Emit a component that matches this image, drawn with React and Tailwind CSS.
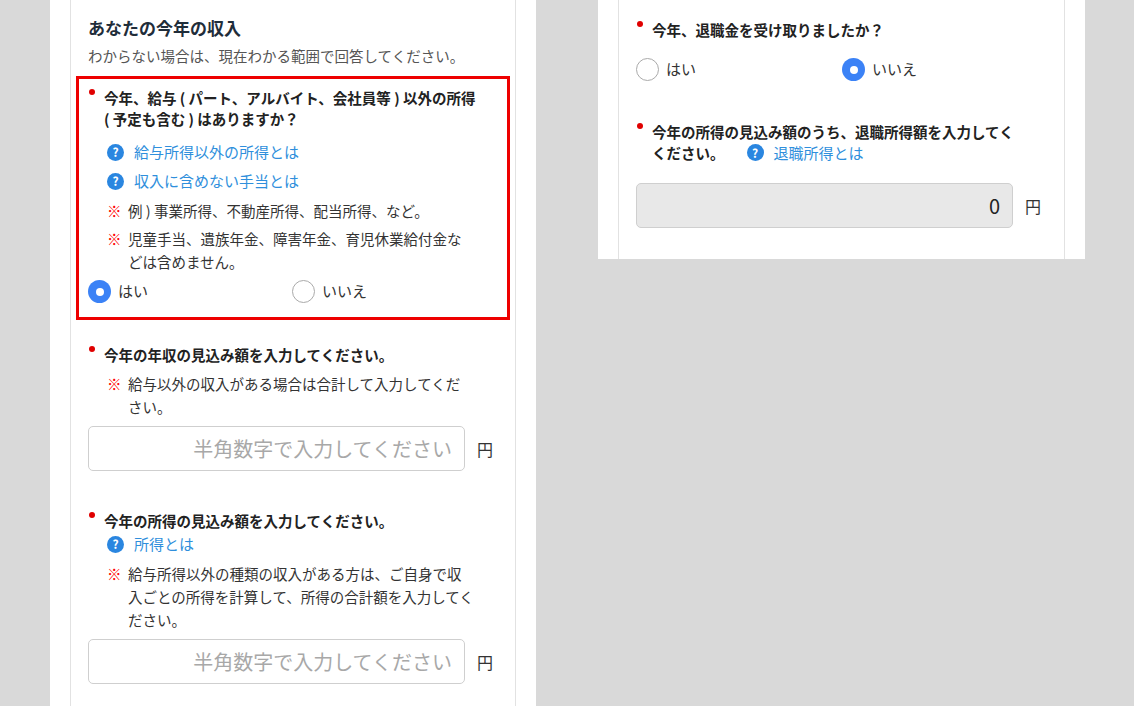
const F = { fontFamily: '"Noto Sans CJK JP", "Noto Sans", sans-serif' };

function Q({ children }) {
  return (
    <div className="relative pl-[16px] text-[14.5px] font-bold leading-[21px] text-[#222] whitespace-nowrap">
      <span className="absolute left-[1px] top-[2px] w-[6px] h-[6px] rounded-full bg-[#e00000]" />
      {children}
    </div>
  );
}
function Help({ children, className = "" }) {
  return (
    <div className={"flex items-center gap-[10px] text-[15px] leading-[20px] text-[#2f8fdc] whitespace-nowrap " + className}>
      <span className="w-[17px] h-[17px] rounded-full bg-[#2a86e0] text-white text-[12px] font-bold flex items-center justify-center leading-none">?</span>
      {children}
    </div>
  );
}
function Note({ children, className = "" }) {
  return (
    <div className={"relative pl-[21px] text-[14.5px] leading-[23px] text-[#333] whitespace-nowrap " + className}>
      <span className="absolute left-0 top-0 text-[#ff0000] font-bold">※</span>
      {children}
    </div>
  );
}
function Radio({ on, label }) {
  return (
    <div className="flex items-center gap-[7px] text-[15px] text-[#333]">
      {on ? (
        <span className="w-[23px] h-[23px] rounded-full bg-[#3b82f6] flex items-center justify-center">
          <span className="w-[8px] h-[8px] rounded-full bg-white" />
        </span>
      ) : (
        <span className="w-[23px] h-[23px] rounded-full border-[1.5px] border-[#aaa] bg-white" />
      )}
      {label}
    </div>
  );
}
function Input({ gray, children }) {
  return (
    <div className="flex items-center gap-[12px]">
      <div className={"w-[377px] h-[45px] rounded-[5px] border border-[#cfcfcf] flex items-center justify-end pr-[12px] text-[20px] " + (gray ? "bg-[#e8e8e8] text-[#222]" : "bg-white text-[#a8a8a8]")}>
        {children}
      </div>
      <span className="text-[16px] text-[#333]">円</span>
    </div>
  );
}

export default function App() {
  return (
    <div style={F} className="w-[1134px] h-[706px] bg-[#d9d9d9] flex overflow-hidden">
      <div className="ml-[50px] w-[486px] h-[706px] bg-white px-[20px] shrink-0">
        <div className="h-full border-x border-[#e2e2e2] px-[5px]">
          <div className="pl-[12px] pt-[16px] text-[17px] font-bold text-[#1f2d3a] leading-[24px]">あなたの今年の収入</div>
          <div className="pl-[12px] mt-[6px] text-[14.5px] text-[#555] leading-[20px] whitespace-nowrap">わからない場合は、現在わかる範囲で回答してください。</div>
          <div className="mt-[10px] border-[3px] border-[#ee0000] pl-[9px] pr-[6px] pt-[8px] pb-[14px]">
            <Q>今年、給与 ( パート、アルバイト、会社員等 ) 以外の所得<br />( 予定も含む ) はありますか？</Q>
            <div className="pl-[19px] mt-[13px]">
              <Help>給与所得以外の所得とは</Help>
              <Help className="mt-[9px]">収入に含めない手当とは</Help>
              <Note className="mt-[8px]">例 ) 事業所得、不動産所得、配当所得、など。</Note>
              <Note className="mt-[5px]">児童手当、遺族年金、障害年金、育児休業給付金な<br />どは含めません。</Note>
            </div>
            <div className="flex mt-[7px]">
              <div className="w-[204px]"><Radio on label="はい" /></div>
              <Radio label="いいえ" />
            </div>
          </div>
          <div className="pl-[12px] mt-[24px]">
            <Q>今年の年収の見込み額を入力してください。</Q>
            <div className="pl-[19px] mt-[7px]">
              <Note>給与以外の収入がある場合は合計して入力してくだ<br />さい。</Note>
            </div>
            <div className="mt-[8px]"><Input>半角数字で入力してください</Input></div>
          </div>
          <div className="pl-[12px] mt-[39px]">
            <Q>今年の所得の見込み額を入力してください。</Q>
            <div className="pl-[19px] mt-[3px]">
              <Help>所得とは</Help>
              <Note className="mt-[8px]">給与所得以外の種類の収入がある方は、ご自身で収<br />入ごとの所得を計算して、所得の合計額を入力してく<br />ださい。</Note>
            </div>
            <div className="mt-[8px]"><Input>半角数字で入力してください</Input></div>
          </div>
        </div>
      </div>
      <div className="ml-[62px] w-[487px] h-[259px] bg-white px-[20px] shrink-0">
        <div className="h-full border-x border-[#e2e2e2] pl-[17px] pt-[19px]">
          <Q>今年、退職金を受け取りましたか？</Q>
          <div className="flex mt-[18px]">
            <div className="w-[206px]"><Radio label="はい" /></div>
            <Radio on label="いいえ" />
          </div>
          <div className="mt-[40px]">
            <Q>今年の所得の見込み額のうち、退職所得額を入力してく<br /><span className="inline-flex items-center">ください。<span className="ml-[22px] font-normal"><Help>退職所得とは</Help></span></span></Q>
          </div>
          <div className="mt-[20px]"><Input gray>0</Input></div>
        </div>
      </div>
    </div>
  );
}
